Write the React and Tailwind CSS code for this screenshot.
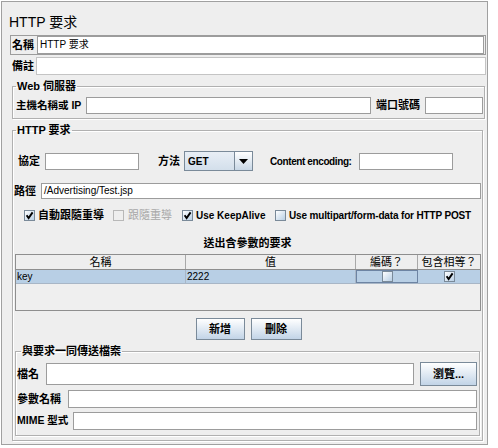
import React from "react";

const Field = ({ className = "", children }) => (
    <div className={`bg-white border border-[#9c9c9c] flex items-center px-[2px] text-[10px] leading-none overflow-hidden whitespace-nowrap ${className}`}>
        {children}
    </div>
);

const CheckMark = () => (
    <svg width="9" height="9" viewBox="0 0 9 9">
        <path d="M1.6 4.2 L3.6 7 L7.6 1.4" stroke="#000" strokeWidth="1.9" fill="none" />
    </svg>
);

const Check = ({ checked, disabled }) => (
    <span
        className={`w-[11px] h-[11px] shrink-0 border flex items-center justify-center ${disabled
                ? "border-[#b8b8b8] bg-[#eeeeee]"
                : "border-[#7a8a99] bg-gradient-to-br from-white to-[#b8cfe5]"
            }`}
    >
        {checked && <CheckMark />}
    </span>
);

const Btn = ({ className = "", children }) => (
    <div className={`border border-[#7a8a99] bg-gradient-to-b from-white to-[#c2d4e7] text-[11px] font-bold flex items-center justify-center ${className}`}>
        {children}
    </div>
);

const App = () => {
    return (
        <div className="w-[498px] h-[448px] bg-white pt-[1px] pl-[1px] font-['Liberation_Sans','Noto_Sans_CJK_TC',sans-serif] text-black">
            <div className="w-[487px] h-[444px] border border-[#a0a0a0] bg-[#eeeeee] overflow-hidden">
                {/* title */}
                <div className="ml-[7px] mt-[10px] h-[20px] leading-[20px] text-[14px]">HTTP 要求</div>

                {/* name */}
                <div className="ml-[8px] mt-[3px] w-[476px] h-[20px] border border-[#9c9c9c] flex items-center">
                    <span className="pl-[1px] w-[26px] text-[11px] font-bold">名稱</span>
                    <Field className="flex-1 h-[18px] mr-[1px]">HTTP 要求</Field>
                </div>

                {/* comments */}
                <div className="ml-[10px] mt-[2px] flex items-center h-[18px]">
                    <span className="w-[24px] text-[11px] font-bold">備註</span>
                    <div className="w-[450px] h-[18px] bg-white border border-[#c4c4c4]" />
                </div>

                {/* web server */}
                <fieldset className="ml-[10px] mt-[4px] w-[473px] border border-[#b0b0b0] pb-[4px] shadow-[inset_1px_1px_0_#fff,1px_1px_0_#fff]">
                    <legend className="ml-[3px] px-[1px] leading-[14px] text-[11px] font-bold">Web 伺服器</legend>
                    <div className="mt-[4px] h-[17px] flex items-center pl-[3px]">
                        <span className="w-[70px] text-[10.5px] font-bold whitespace-nowrap">主機名稱或 IP</span>
                        <Field className="w-[285px] h-[17px]" />
                        <span className="ml-[5px] w-[49px] text-[11px] font-bold">端口號碼</span>
                        <Field className="w-[58px] h-[17px]" />
                    </div>
                </fieldset>

                {/* http request */}
                <fieldset className="ml-[10px] mt-[4px] w-[471px] border border-[#b0b0b0] pb-[4px] shadow-[inset_1px_1px_0_#fff,1px_1px_0_#fff]">
                    <legend className="ml-[3px] px-[1px] leading-[14px] text-[11px] font-bold">HTTP 要求</legend>

                    <div className="mt-[14px] h-[20px] flex items-center pl-[5px]">
                        <span className="w-[27px] text-[11px] font-bold">協定</span>
                        <Field className="w-[94px] h-[17px]" />
                        <span className="ml-[19px] w-[26px] text-[11px] font-bold">方法</span>
                        <div className="w-[69px] h-[20px] border border-[#7a8a99] flex bg-gradient-to-b from-[#e8eef5] to-[#d3dfeb]">
                            <div className="flex-1 flex items-center pl-[3px] text-[10px] font-bold">GET</div>
                            <div className="w-[18px] border-l border-[#7a8a99] flex items-center justify-center bg-gradient-to-b from-white to-[#c8d7e6]">
                                <svg width="9" height="5" viewBox="0 0 9 5">
                                    <path d="M0 0 H9 L4.5 5 Z" fill="#000" />
                                </svg>
                            </div>
                        </div>
                        <span className="ml-[17px] w-[89px] text-[10px] font-bold tracking-[-0.4px] whitespace-nowrap">Content encoding:</span>
                        <Field className="w-[94px] h-[17px]" />
                    </div>

                    <div className="mt-[12px] h-[16px] flex items-center pl-[1px]">
                        <span className="w-[27px] text-[11px] font-bold">路徑</span>
                        <Field className="w-[440px] h-[16px]">/Advertising/Test.jsp</Field>
                    </div>

                    <div className="mt-[8px] h-[16px] flex items-center pl-[11px] text-[11px] font-bold whitespace-nowrap">
                        <div className="w-[89px] flex items-center gap-[3px]">
                            <Check checked />
                            <span>自動跟隨重導</span>
                        </div>
                        <div className="w-[69px] flex items-center gap-[4px] text-[#a8a8a8] font-normal">
                            <Check disabled />
                            <span>跟隨重導</span>
                        </div>
                        <div className="w-[93px] flex items-center gap-[3px] text-[10px]">
                            <Check checked />
                            <span>Use KeepAlive</span>
                        </div>
                        <div className="flex items-center gap-[3px] text-[10px] tracking-[-0.15px]">
                            <Check />
                            <span>Use multipart/form-data for HTTP POST</span>
                        </div>
                    </div>

                    <div className="mt-[13px] h-[14px] leading-[14px] text-center text-[11px] font-bold">送出含參數的要求</div>

                    {/* arguments table */}
                    <div className="mt-[4px] ml-[2px] w-[466px] h-[57px] border border-[#8e8e8e] bg-[#efefef] text-[10px]">
                        <div className="grid grid-cols-[170px_170px_62px_1fr] h-[15px] border-b border-[#8e8e8e] bg-[#eeeeee] text-[11px] leading-[14px]">
                            <div className="border-r border-[#a8a8a8] text-center">名稱</div>
                            <div className="border-r border-[#a8a8a8] text-center">值</div>
                            <div className="border-r border-[#a8a8a8] text-center">編碼？</div>
                            <div className="text-center">包含相等？</div>
                        </div>
                        <div className="grid grid-cols-[170px_170px_62px_1fr] h-[14px] bg-[#b8cfe5] border-b border-[#a8b6c6] leading-[13px]">
                            <div className="border-r border-[#a8b6c6] pl-[1px]">key</div>
                            <div className="border-r border-[#a8b6c6] pl-[1px]">2222</div>
                            <div className="border border-[#6d84a3] flex items-center justify-center">
                                <Check />
                            </div>
                            <div className="flex items-center justify-center">
                                <Check checked />
                            </div>
                        </div>
                    </div>

                    <div className="mt-[7px] h-[22px] flex justify-center gap-[6px] pl-[2px]">
                        <Btn className="w-[49px] h-[22px]">新增</Btn>
                        <Btn className="w-[51px] h-[22px]">刪除</Btn>
                    </div>

                    {/* files */}
                    <fieldset className="ml-[2px] mt-[4px] w-[465px] border border-[#b0b0b0] pb-[5px] shadow-[inset_1px_1px_0_#fff,1px_1px_0_#fff]">
                        <legend className="ml-[5px] px-[1px] leading-[14px] text-[11px] font-bold">與要求一同傳送檔案</legend>
                        <div className="mt-[4px] h-[24px] flex items-center pl-[1px]">
                            <span className="w-[29px] text-[11px] font-bold">檔名</span>
                            <Field className="w-[368px] h-[22px]" />
                            <Btn className="ml-[6px] w-[57px] h-[24px]">瀏覽...</Btn>
                        </div>
                        <div className="mt-[4px] h-[18px] flex items-center pl-[1px]">
                            <span className="w-[51px] text-[11px] font-bold">參數名稱</span>
                            <Field className="w-[409px] h-[18px]" />
                        </div>
                        <div className="mt-[4px] h-[18px] flex items-center pl-[1px]">
                            <span className="w-[56px] text-[10.5px] font-bold whitespace-nowrap">MIME 型式</span>
                            <Field className="w-[404px] h-[18px]" />
                        </div>
                    </fieldset>
                </fieldset>
            </div>
        </div>
    );
};

export default App;
